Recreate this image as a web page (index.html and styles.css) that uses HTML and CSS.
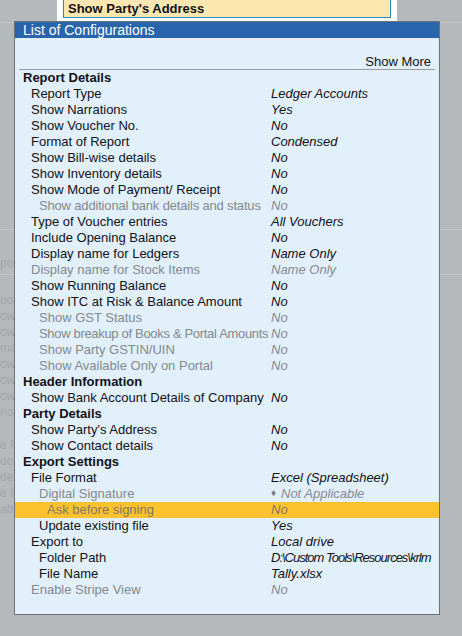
FILE: index.html
```html
<!DOCTYPE html>
<html>
<head>
<meta charset="utf-8">
<link rel="stylesheet" href="styles.css">
</head>
<body>
<div class="screen">
  <div class="bg">
    <div class="bg-line"></div>
    <div class="bg-line gap-a"></div>
    <div class="bg-row gap-b">po</div>
    <div class="bg-line gap-c"></div>
    <div class="bg-group gap-d">
      <div class="bg-row">oo</div>
      <div class="bg-row">ow</div>
      <div class="bg-row">ow</div>
      <div class="bg-row">ma</div>
      <div class="bg-row">ow</div>
      <div class="bg-row">ow</div>
      <div class="bg-row">ow</div>
      <div class="bg-row">no</div>
    </div>
    <div class="bg-group gap-e">
      <div class="bg-row">e F</div>
      <div class="bg-row">oo</div>
      <div class="bg-row">de</div>
      <div class="bg-row">e N</div>
      <div class="bg-row">ab</div>
    </div>
  </div>

  <div class="menu">
    <div class="menu-sel">Show Party's Address</div>
  </div>

  <div class="dialog">
    <div class="title">List of Configurations</div>
    <div class="more-wrap"><div class="more">Show More</div></div>
    <div class="rows">
      <div class="row h"><span class="lab">Report Details</span></div>
      <div class="row l1"><span class="lab">Report Type</span><span class="val">Ledger Accounts</span></div>
      <div class="row l1"><span class="lab">Show Narrations</span><span class="val">Yes</span></div>
      <div class="row l1"><span class="lab">Show Voucher No.</span><span class="val">No</span></div>
      <div class="row l1"><span class="lab">Format of Report</span><span class="val">Condensed</span></div>
      <div class="row l1"><span class="lab">Show Bill-wise details</span><span class="val">No</span></div>
      <div class="row l1"><span class="lab">Show Inventory details</span><span class="val">No</span></div>
      <div class="row l1"><span class="lab">Show Mode of Payment/ Receipt</span><span class="val">No</span></div>
      <div class="row l2 dim"><span class="lab tight1">Show additional bank details and status</span><span class="val">No</span></div>
      <div class="row l1"><span class="lab">Type of Voucher entries</span><span class="val">All Vouchers</span></div>
      <div class="row l1"><span class="lab">Include Opening Balance</span><span class="val">No</span></div>
      <div class="row l1"><span class="lab">Display name for Ledgers</span><span class="val">Name Only</span></div>
      <div class="row l1 dim"><span class="lab">Display name for Stock Items</span><span class="val">Name Only</span></div>
      <div class="row l1"><span class="lab">Show Running Balance</span><span class="val">No</span></div>
      <div class="row l1"><span class="lab">Show ITC at Risk &amp; Balance Amount</span><span class="val">No</span></div>
      <div class="row l2 dim"><span class="lab">Show GST Status</span><span class="val">No</span></div>
      <div class="row l2 dim"><span class="lab tight2">Show breakup of Books &amp; Portal Amounts</span><span class="val">No</span></div>
      <div class="row l2 dim"><span class="lab">Show Party GSTIN/UIN</span><span class="val">No</span></div>
      <div class="row l2 dim"><span class="lab">Show Available Only on Portal</span><span class="val">No</span></div>
      <div class="row h"><span class="lab">Header Information</span></div>
      <div class="row l1"><span class="lab">Show Bank Account Details of Company</span><span class="val">No</span></div>
      <div class="row h"><span class="lab">Party Details</span></div>
      <div class="row l1"><span class="lab">Show Party's Address</span><span class="val">No</span></div>
      <div class="row l1"><span class="lab">Show Contact details</span><span class="val">No</span></div>
      <div class="row h"><span class="lab">Export Settings</span></div>
      <div class="row l1"><span class="lab">File Format</span><span class="val">Excel (Spreadsheet)</span></div>
      <div class="row l2 dim"><span class="lab">Digital Signature</span><span class="val"><span class="diamond">♦</span>Not Applicable</span></div>
      <div class="row l3 dim sel"><span class="lab">Ask before signing</span><span class="val">No</span></div>
      <div class="row l2"><span class="lab">Update existing file</span><span class="val">Yes</span></div>
      <div class="row l1"><span class="lab">Export to</span><span class="val">Local drive</span></div>
      <div class="row l2"><span class="lab">Folder Path</span><span class="val path">D:\Custom Tools\Resources\krlm</span></div>
      <div class="row l2"><span class="lab">File Name</span><span class="val">Tally.xlsx</span></div>
      <div class="row l1 dim"><span class="lab">Enable Stripe View</span><span class="val">No</span></div>
    </div>
  </div>
</div>
</body>
</html>
```

FILE: styles.css
```css
* { box-sizing: border-box; }
html, body {
  margin: 0;
  padding: 0;
}
body {
  font-family: "Liberation Sans", Arial, sans-serif;
  font-size: 13px;
  background: #b6b9bc;
}
.screen {
  position: relative;
  width: 462px;
  height: 636px;
  overflow: hidden;
  background: #b6b9bc;
}

/* dimmed underlying screen */
.bg {
  padding-top: 22px;
}
.bg-line {
  height: 1px;
  background: #c4c6c9;
}
.gap-a { margin-top: 206px; }
.gap-b { margin-top: 25px; }
.gap-c { margin-top: 3px; }
.gap-d { margin-top: 17px; }
.gap-e { margin-top: 17px; }
.bg-row {
  height: 16px;
  line-height: 16px;
  font-size: 12px;
  color: #a2a5a8;
  white-space: nowrap;
}

/* menu strip above dialog */
.menu {
  position: absolute;
  left: 57px;
  top: 0;
  width: 340px;
  height: 21px;
  background: #ffffff;
  padding: 0 6px;
}
.menu-sel {
  height: 18px;
  background: #fde7b0;
  border: 1px solid #1e8ac4;
  border-top: none;
  font-weight: bold;
  line-height: 17px;
  padding-left: 4px;
  color: #111;
}

/* dialog */
.dialog {
  position: absolute;
  left: 14px;
  top: 21px;
  width: 426px;
  height: 594px;
  border: 1px solid #6d7074;
  background: #e1f0fb;
}
.title {
  height: 16px;
  line-height: 16px;
  background: #2a64ad;
  color: #ffffff;
  font-size: 14px;
  padding-left: 8px;
}
.more-wrap {
  padding: 16px 4px 0 4px;
}
.more {
  line-height: 15px;
  height: 16px;
  text-align: right;
  padding-right: 4px;
  border-bottom: 1px solid #9a9da1;
  color: #111;
}
.rows {
  display: flex;
  flex-direction: column;
}
.row {
  display: grid;
  height: 16px;
  line-height: 16px;
  color: #111118;
  white-space: nowrap;
}
.h { padding-left: 8px; font-weight: bold; grid-template-columns: 248px 1fr; }
.l1 { padding-left: 16px; grid-template-columns: 240px 1fr; }
.l2 { padding-left: 24px; grid-template-columns: 232px 1fr; }
.l3 { padding-left: 32px; grid-template-columns: 224px 1fr; }
.tight1 { letter-spacing: -0.17px; }
.tight2 { letter-spacing: -0.32px; }
.val {
  font-style: italic;
}
.dim { color: #85888d; }
.dim .val { color: #868a94; }
.sel { background: #fec22f; }
.sel .lab, .sel .val { color: #7f7866; }
.diamond {
  font-style: normal;
  font-size: 10px;
  display: inline-block;
  width: 10px;
  vertical-align: top;
  line-height: 14px;
  color: #7a7d83;
}
.path {
  letter-spacing: -1px;
}
```
